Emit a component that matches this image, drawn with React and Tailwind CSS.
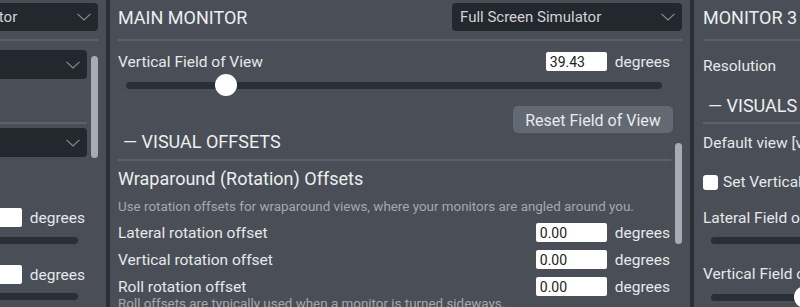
import React from "react";

const Chevron = ({ w = 14 }) => (
  <svg width={w} height="8" viewBox={`0 0 ${w} 8`} fill="none">
    <polyline points={`0.5,0.8 ${w / 2},7 ${w - 0.5},0.8`} stroke="#8a8f96" strokeWidth="1.1" />
  </svg>
);

const Divider = ({ className = "" }) => <div className={`h-[2px] bg-[#5d626a] ${className}`} />;

const Dropdown = ({ text, w = "w-[230px]", h = "h-full" }) => (
  <div className={`${w} ${h} shrink-0 bg-[#23272e] rounded-[4px] flex items-center justify-between pl-2 pr-[7px]`}>
    <span className="text-[15px] text-[#d0d3d6] whitespace-nowrap">{text}</span>
    <Chevron />
  </div>
);

const NumberBox = ({ value, w = "w-[71px]" }) => (
  <div className={`${w} h-[19px] shrink-0 bg-white rounded-[2px] pl-[4px] flex items-center text-[14px] text-[#222] leading-none pt-[2px]`}>
    {value}
  </div>
);

const Degrees = ({ className = "" }) => (
  <span className={`ml-2 pt-[3px] text-[15.5px] text-[#e6e8ea] leading-none whitespace-nowrap ${className}`}>degrees</span>
);

const LeftPanel = () => (
  <div className="w-[106px] shrink-0 bg-[#4a4f57] flex justify-end overflow-hidden">
    <div className="w-[300px] shrink-0 pr-2 flex flex-col *:shrink-0">
      <div className="mt-[3px] h-[28px] flex justify-end">
        <Dropdown text="Full Screen Simulator" />
      </div>
      <Divider className="mt-2" />
      <div className="flex-1 flex">
        <div className="flex-1 flex flex-col *:shrink-0">
          <div className="mt-[9px] h-[29px] flex justify-end">
            <Dropdown text="1920 x 1080" w="w-[180px]" />
          </div>
          <div className="mt-[16px] h-[20px]" />
          <Divider className="mt-[7px]" />
          <div className="mt-[4px] h-[29px] flex justify-end">
            <Dropdown text="Forward" w="w-[180px]" />
          </div>
          <div className="mt-[17px] h-[16px]" />
          <div className="mt-[17px] h-[20px] flex items-center justify-end">
            <NumberBox value="0.00" />
            <Degrees className="mr-[2px]" />
          </div>
          <div className="mt-[10px] h-[7px] mr-[9px] rounded-full bg-[#2a2e35]" />
          <div className="mt-[20px] h-[20px] flex items-center justify-end">
            <NumberBox value="0.00" />
            <Degrees className="mr-[2px]" />
          </div>
          <div className="mt-[9px] h-[7px] mr-[9px] rounded-full bg-[#2a2e35]" />
        </div>
        <div className="w-[7px] ml-[4px] shrink-0">
          <div className="mt-[15px] h-[102px] rounded-full bg-[#a7acb1]" />
        </div>
      </div>
    </div>
  </div>
);

const OffsetRow = ({ label, className = "" }) => (
  <div className={`h-[20px] flex items-center ${className}`}>
    <span className="flex-1 pt-[3px] text-[15.5px] text-[#e6e8ea]">{label}</span>
    <NumberBox value="0.00" />
    <Degrees className="mr-[1px]" />
  </div>
);

const MainPanel = () => (
  <div className="w-[580px] shrink-0 bg-[#4a4f57] pl-2 pr-[8px] flex flex-col overflow-hidden *:shrink-0">
    <div className="mt-[3px] h-[28px] flex items-center justify-between">
      <span className="text-[18px] text-[#eceef0]">MAIN MONITOR</span>
      <Dropdown text="Full Screen Simulator" />
    </div>
    <Divider className="mt-2" />

    <div className="mr-[9px] flex flex-col *:shrink-0">
      <div className="mt-[10px] h-[20px] flex items-center">
        <span className="flex-1 pt-[3px] text-[15.5px] text-[#e6e8ea]">Vertical Field of View</span>
        <NumberBox value="39.43" w="w-[61px]" />
        <Degrees className="mr-[3px]" />
      </div>
      <div className="mt-[3px] h-[22px] pl-2 pr-[11px] flex items-center">
        <div className="relative flex-1 h-[7px] rounded-full bg-[#2a2e35]">
          <div className="absolute -top-[8px] left-[89px] w-[22px] h-[22px] rounded-full bg-white" />
        </div>
      </div>
      <button className="mt-[10px] self-end w-[160px] h-[27px] pt-[3px] rounded-[5px] bg-[#636972] text-[16px] text-[#e8eaec]">
        Reset Field of View
      </button>
    </div>

    <div className="flex-1 flex">
      <div className="flex-1 flex flex-col *:shrink-0">
        <div className="h-[18px] leading-[18px] pl-[5px] text-[18px] text-[#eceef0]">— VISUAL OFFSETS</div>
        <Divider className="mt-2" />
        <div className="mt-[7px] leading-[22px] text-[18px] text-[#eceef0]">Wraparound (Rotation) Offsets</div>
        <div className="mt-[9px] leading-[16px] text-[13.4px] text-[#a4a8ad] whitespace-nowrap">
          Use rotation offsets for wraparound views, where your monitors are angled around you.
        </div>
        <OffsetRow label="Lateral rotation offset" className="mt-[7px]" />
        <OffsetRow label="Vertical rotation offset" className="mt-[7px]" />
        <OffsetRow label="Roll rotation offset" className="mt-[7px]" />
        <div className="leading-[16px] text-[13.4px] text-[#a4a8ad] whitespace-nowrap">
          Roll offsets are typically used when a monitor is turned sideways.
        </div>
      </div>
      <div className="w-[7px] ml-[4px] shrink-0">
        <div className="mt-[10px] h-[101px] rounded-full bg-[#a7acb1]" />
      </div>
    </div>
  </div>
);

const RightPanel = () => (
  <div className="flex-1 min-w-0 bg-[#4a4f57] pl-[9px] flex flex-col overflow-hidden whitespace-nowrap *:shrink-0">
    <div className="mt-[3px] h-[28px] flex items-center">
      <span className="text-[18px] text-[#eceef0]">MONITOR 3</span>
    </div>
    <Divider className="mt-2 w-[300px]" />
    <div className="mt-[15px] leading-[20px] text-[15.5px] text-[#e6e8ea]">Resolution</div>
    <div className="mt-[20px] leading-[20px] pl-[5px] text-[18px] text-[#eceef0]">— VISUALS</div>
    <Divider className="mt-[6px] w-[300px]" />
    <div className="mt-[9px] leading-[20px] text-[15.5px] text-[#e6e8ea]">Default view [vertical FOV]</div>
    <div className="mt-[21px] h-[16px] flex items-center">
      <div className="w-[15px] h-[15px] rounded-[3px] bg-white shrink-0" />
      <span className="ml-[5px] pt-[2px] text-[15.5px] text-[#e6e8ea]">Set Vertical Field of View</span>
    </div>
    <div className="mt-[18px] leading-[20px] text-[15.5px] text-[#e6e8ea]">Lateral Field of View</div>
    <div className="mt-[9px] ml-2 h-[7px] w-[300px] rounded-full bg-[#2a2e35]" />
    <div className="mt-[20px] leading-[20px] text-[15.5px] text-[#e6e8ea]">Vertical Field of View</div>
    <div className="mt-[2px] ml-2 h-[22px] w-[300px] relative flex items-center">
      <div className="w-full h-[7px] rounded-full bg-[#2a2e35]" />
      <div className="absolute top-0 left-[83px] w-[22px] h-[22px] rounded-full bg-white" />
    </div>
  </div>
);

export default function App() {
  return (
    <div
      className="w-[800px] h-[307px] overflow-hidden bg-[#2b2f36] flex gap-[4px]"
      style={{ fontFamily: "Roboto, 'Noto Sans', sans-serif" }}
    >
      <LeftPanel />
      <MainPanel />
      <RightPanel />
    </div>
  );
}
